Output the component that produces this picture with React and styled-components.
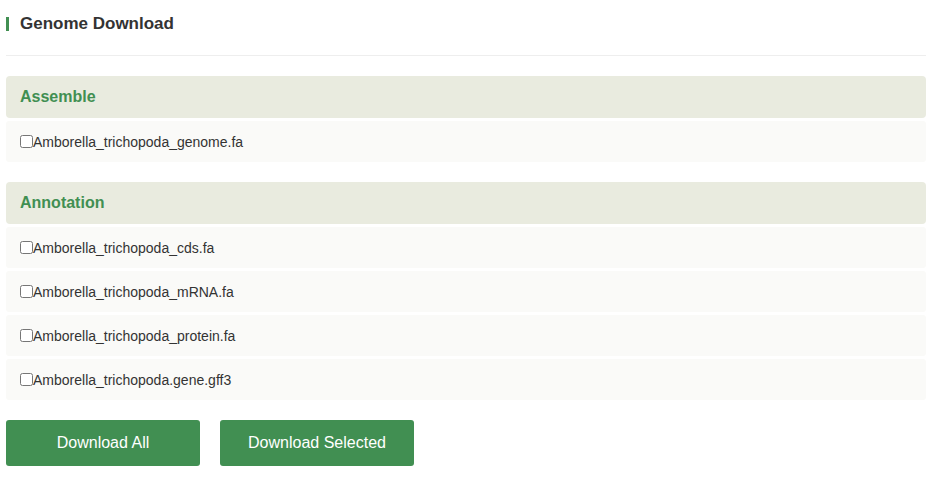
import React, { useState } from 'react';
import styled, { createGlobalStyle } from 'styled-components';

const GlobalStyle = createGlobalStyle`
  body {
    margin: 0;
    background: #fff;
    font-family: 'Liberation Sans', Arial, sans-serif;
    color: #333;
  }
`;

const Page = styled.div`
  width: 920px;
  padding: 0 22px 0 6px;
`;

const TitleBar = styled.div`
  display: flex;
  align-items: center;
  height: 56px;
  border-bottom: 1px solid #eeeeee;
  box-sizing: border-box;
  padding-bottom: 7px;
`;

const Marker = styled.span`
  width: 3px;
  height: 14px;
  background: #418f52;
  margin-right: 11px;
`;

const Title = styled.h2`
  margin: 0;
  font-size: 17px;
  font-weight: bold;
  color: #333;
`;

const Section = styled.section`
  display: flex;
  flex-direction: column;
  gap: 3px;
  margin-top: 20px;
`;

const SectionHeader = styled.div`
  height: 42px;
  display: flex;
  align-items: center;
  padding-left: 14px;
  background: #e9ebdf;
  border-radius: 4px;
  color: #418f52;
  font-size: 16px;
  font-weight: bold;
`;

const FileRow = styled.label`
  height: 41px;
  display: flex;
  align-items: center;
  padding-left: 14px;
  background: #fafaf8;
  border-radius: 3px;
  font-size: 14px;
  color: #333;
`;

const Check = styled.input`
  margin: 0;
  width: 13px;
  height: 13px;
`;

const Actions = styled.div`
  display: flex;
  gap: 20px;
  margin-top: 20px;
`;

const Button = styled.button`
  width: 194px;
  height: 46px;
  border: none;
  border-radius: 3px;
  background: #418f52;
  color: #fff;
  font-family: 'Liberation Sans', Arial, sans-serif;
  font-size: 16px;
  cursor: pointer;
`;

const groups = [
  { name: 'Assemble', files: ['Amborella_trichopoda_genome.fa'] },
  {
    name: 'Annotation',
    files: [
      'Amborella_trichopoda_cds.fa',
      'Amborella_trichopoda_mRNA.fa',
      'Amborella_trichopoda_protein.fa',
      'Amborella_trichopoda.gene.gff3',
    ],
  },
];

export default function App() {
  const [selected, setSelected] = useState({});

  const toggle = (f) => setSelected((s) => ({ ...s, [f]: !s[f] }));

  return (
    <Page>
      <GlobalStyle />
      <TitleBar>
        <Marker />
        <Title>Genome Download</Title>
      </TitleBar>
      {groups.map((g) => (
        <Section key={g.name}>
          <SectionHeader>{g.name}</SectionHeader>
          {g.files.map((f) => (
            <FileRow key={f}>
              <Check type="checkbox" checked={!!selected[f]} onChange={() => toggle(f)} />
              {f}
            </FileRow>
          ))}
        </Section>
      ))}
      <Actions>
        <Button>Download All</Button>
        <Button>Download Selected</Button>
      </Actions>
    </Page>
  );
}
